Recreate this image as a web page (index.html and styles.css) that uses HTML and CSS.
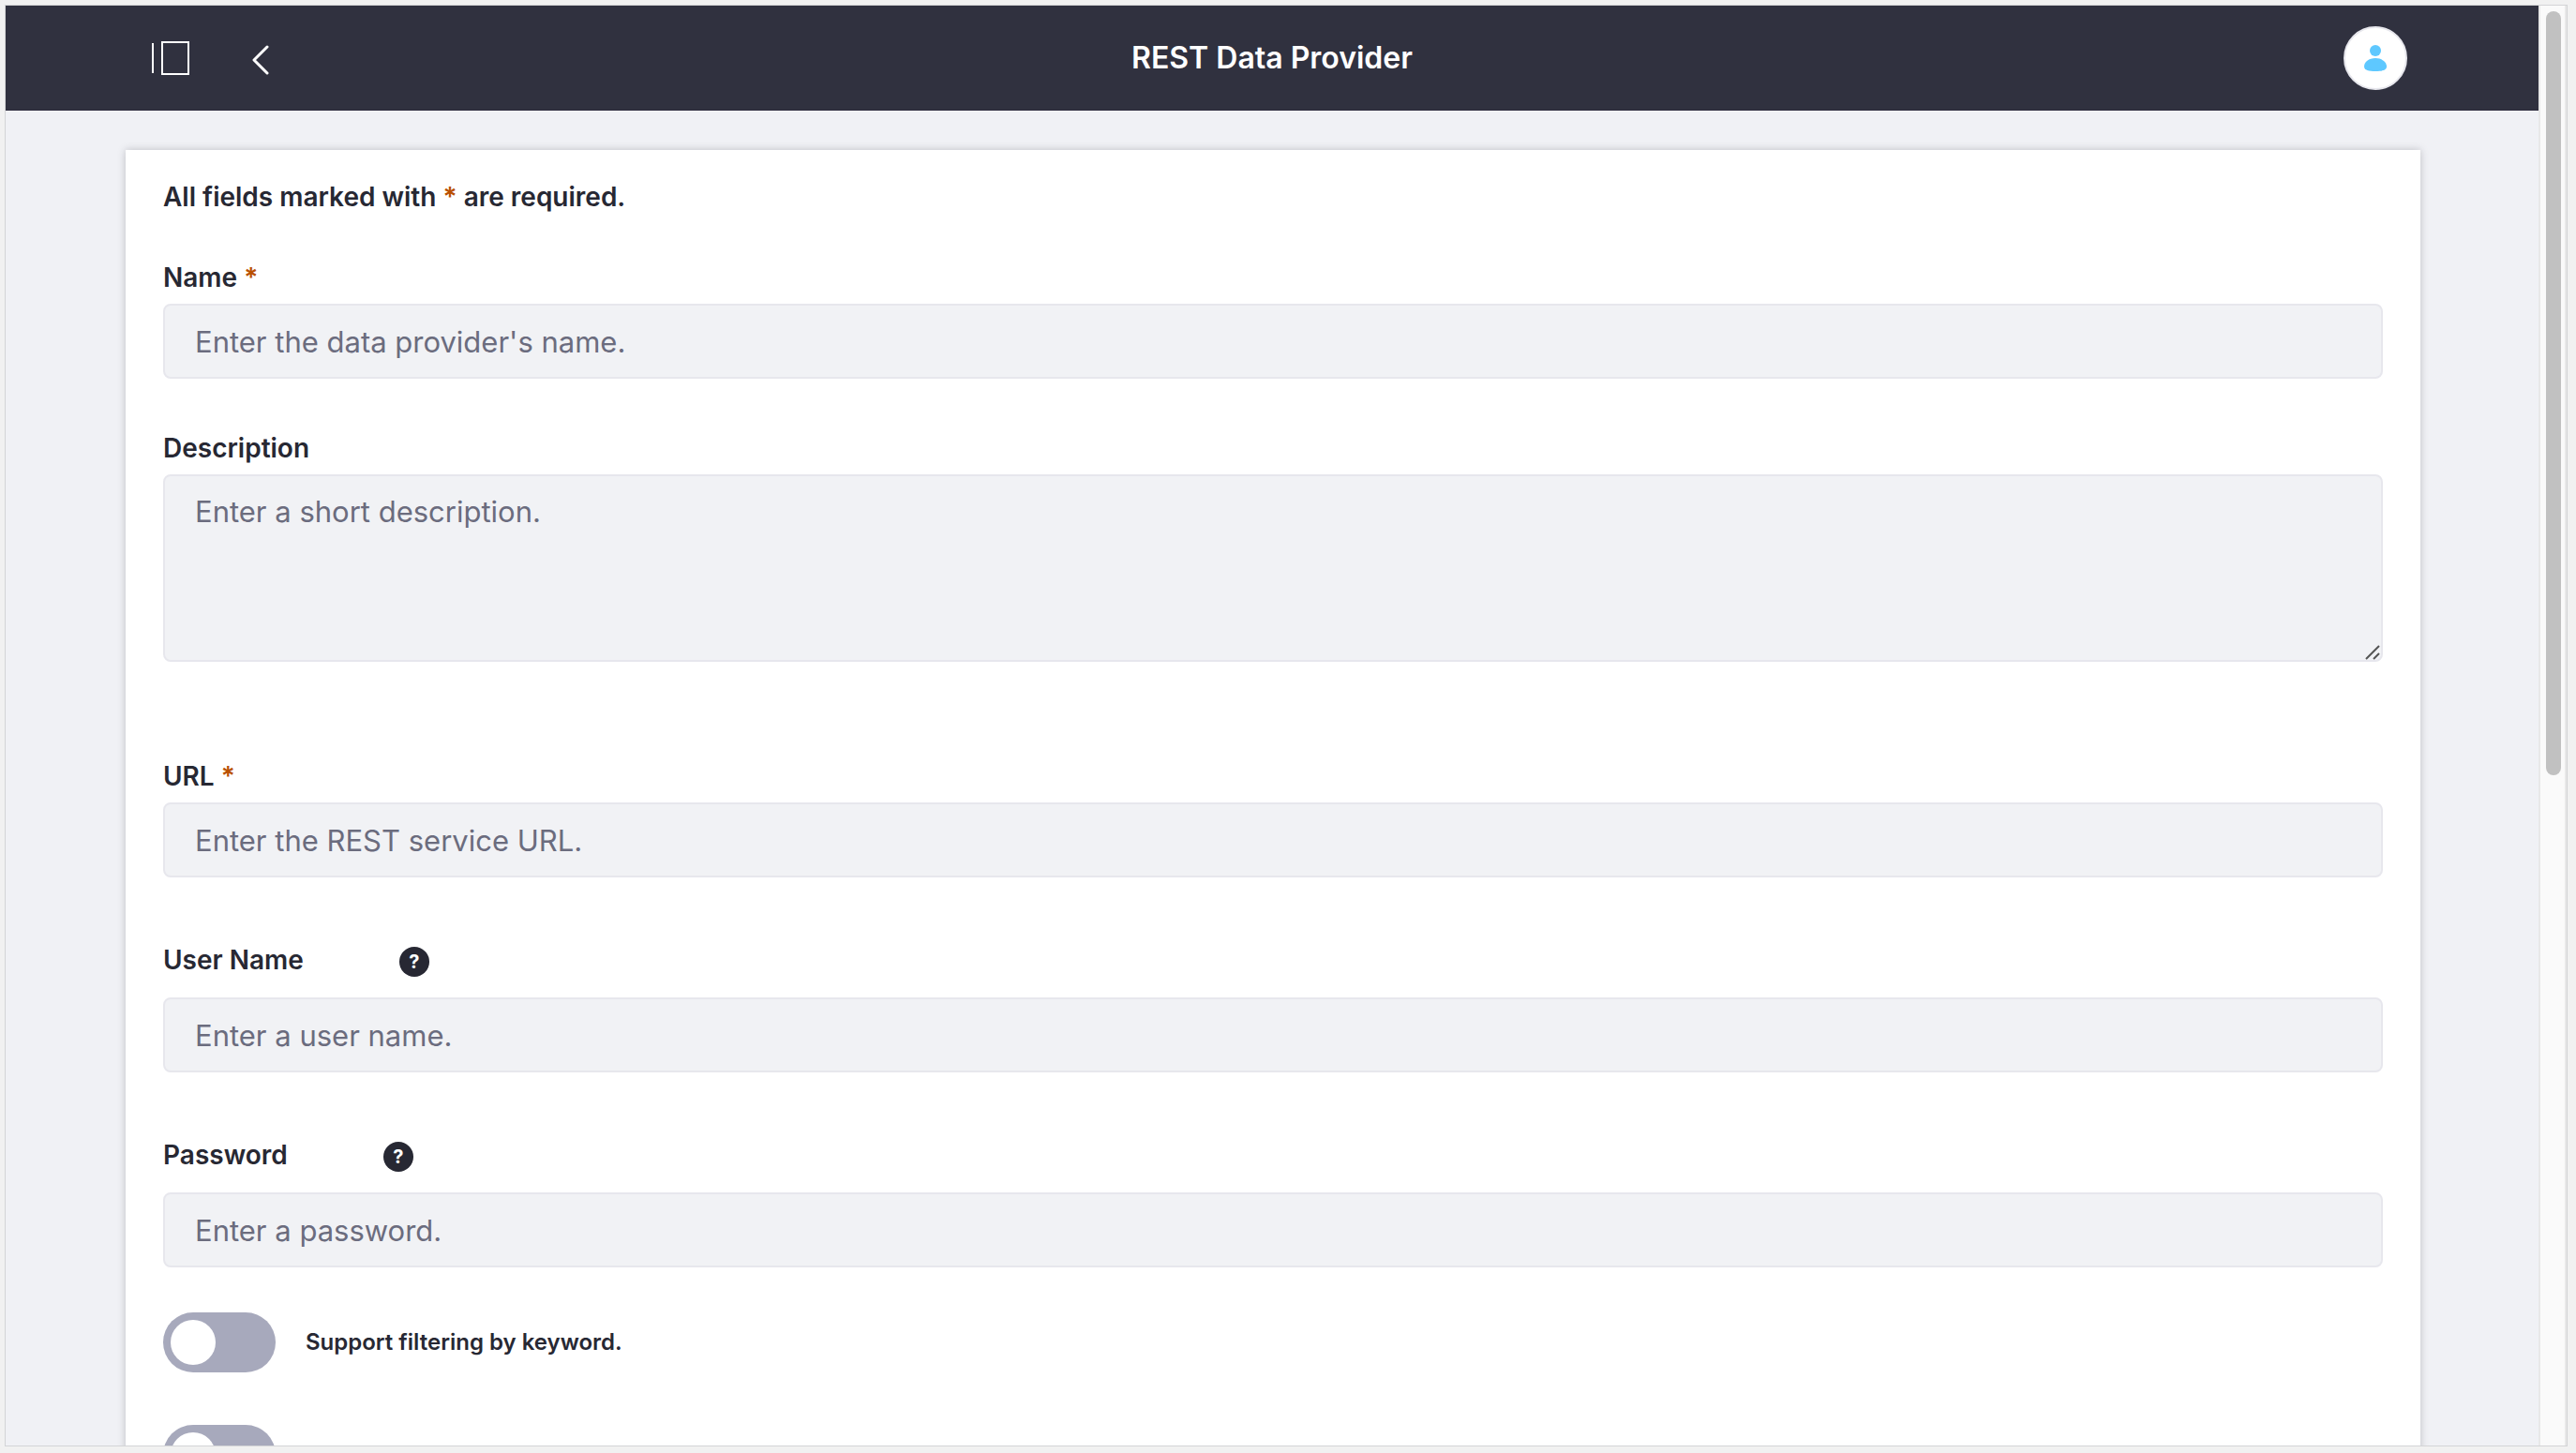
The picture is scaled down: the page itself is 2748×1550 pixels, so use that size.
FILE: index.html
```html
<!DOCTYPE html>
<html lang="en">
<head>
<meta charset="utf-8">
<title>REST Data Provider</title>
<link rel="stylesheet" href="styles.css">
</head>
<body>
<div class="window">
  <div class="viewport">
    <header class="topbar">
      <nav class="topbar-nav">
        <button class="icon-button" type="button" aria-label="Toggle menu">
          <svg width="40" height="36" viewBox="0 0 40 36" fill="none" stroke="#fff" stroke-width="2"><path d="M1 2v32M11 1h28v34H11z"/></svg>
        </button>
        <a class="icon-button" href="#" aria-label="Back">
          <svg width="18" height="36" viewBox="0 0 18 36" fill="none" stroke="#fff" stroke-width="3" stroke-linecap="round" stroke-linejoin="round"><path d="M16 6L2 20l14 14"/></svg>
        </a>
      </nav>
      <h1 class="title">REST Data Provider</h1>
      <button class="avatar" type="button" aria-label="User profile">
        <svg width="24" height="28" viewBox="0 0 24 28" fill="#5ec8ff"><circle cx="12" cy="6" r="6"/><path d="M12 14c7 0 12 4 12 9 0 4-5 5-12 5S0 27 0 23c0-5 5-9 12-9z"/></svg>
      </button>
    </header>
    <main class="page">
      <form class="sheet">
        <p class="notice">All fields marked with <span class="required">*</span> are required.</p>
        <div class="field">
          <label class="label" for="name">Name <span class="required">*</span></label>
          <input class="control" id="name" type="text" placeholder="Enter the data provider's name.">
        </div>
        <div class="field field-long">
          <label class="label" for="description">Description</label>
          <div class="area-wrap">
            <textarea class="control control-area" id="description" placeholder="Enter a short description."></textarea>
            <svg class="grip" width="16" height="16" viewBox="0 0 16 16" fill="none" stroke="#555" stroke-width="2"><path d="M1 15L15 1M9 15l6-6"/></svg>
          </div>
        </div>
        <div class="field">
          <label class="label" for="url">URL <span class="required">*</span></label>
          <input class="control" id="url" type="text" placeholder="Enter the REST service URL.">
        </div>
        <div class="field">
          <div class="label-row">
            <label class="label" for="user">User Name</label>
            <button class="help" type="button" aria-label="Help for user name">?</button>
          </div>
          <input class="control" id="user" type="text" placeholder="Enter a user name.">
        </div>
        <div class="field">
          <div class="label-row">
            <label class="label" for="password">Password</label>
            <button class="help" type="button" aria-label="Help for password">?</button>
          </div>
          <input class="control" id="password" type="password" placeholder="Enter a password.">
        </div>
        <div class="switches">
          <label class="switch"><input class="switch-input" type="checkbox" role="switch">Support filtering by keyword.</label>
          <label class="switch"><input class="switch-input" type="checkbox" role="switch" aria-label="Cache data on the first request"></label>
        </div>
      </form>
    </main>
  </div>
  <div class="scrollbar"><div class="thumb"></div></div>
</div>
</body>
</html>
```
FILE: styles.css
```css
* { box-sizing: border-box; }

body {
  margin: 0;
  height: 100vh;
  padding: 5px 9px 7px 5px;
  background: #f1f1f1;
  color: #272833;
  font-family: Inter, "Liberation Sans", sans-serif;
  overflow: hidden;
}

.window {
  display: flex;
  height: 100%;
  border: 1px solid #d3d4d6;
  background: #f0f1f5;
  overflow: hidden;
}

.viewport { flex: 1; min-width: 0; overflow: hidden; }

.topbar {
  display: grid;
  grid-template-columns: 1fr auto 1fr;
  align-items: center;
  height: 112px;
  padding: 0 140px;
  background: #30313f;
  box-shadow: inset 0 -1px #2c2a3c;
}

.topbar-nav { display: flex; align-items: center; gap: 67px; padding-left: 16px; }

.icon-button {
  display: block;
  padding: 0;
  border: 0;
  background: none;
}

.icon-button svg, .avatar svg { display: block; }

.title {
  margin: 0;
  color: #fff;
  font-size: 32px;
  font-weight: 600;
  line-height: 48px;
}

.avatar {
  display: grid;
  place-items: center;
  justify-self: end;
  width: 68px;
  height: 68px;
  padding: 0;
  border: 2px solid #e7e7ed;
  border-radius: 50%;
  background: #fff;
}

.page { padding: 42px 126px 42px 128px; }

.sheet {
  padding: 30px 40px;
  background: #fff;
  box-shadow: 0 0 8px rgba(39, 40, 51, 0.25);
}

.notice { margin: 0 0 46px; font-size: 28px; font-weight: 600; line-height: 40px; }

.required { color: #b95000; }

.field { margin-bottom: 54px; }
.field-long { margin-bottom: 102px; }

.label { display: block; padding-bottom: 8px; font-size: 28px; font-weight: 600; line-height: 40px; }

.label-row { display: flex; align-items: flex-start; gap: 102px; padding: 14px 0 20px; }
.label-row .label { padding: 0; }

.control {
  display: block;
  width: 100%;
  height: 80px;
  padding: 0 32px;
  border: 2px solid #e7e7ed;
  border-radius: 8px;
  background: #f1f2f5;
  color: #272833;
  font-family: inherit;
  font-size: 31px;
  line-height: 48px;
}

.control::placeholder { color: #6b6c7e; opacity: 1; }

.area-wrap { position: relative; }

.control-area { height: 200px; padding: 14px 32px; resize: vertical; }
.control-area::-webkit-resizer { background: transparent; }

/* Larger resize grip, drawn over the corner of the text area */
.grip { position: absolute; right: 3px; bottom: 2px; pointer-events: none; }

.help {
  width: 32px;
  height: 32px;
  margin-top: 6px;
  padding: 0;
  border: 0;
  border-radius: 50%;
  background: #272833;
  color: #fff;
  font-family: inherit;
  font-size: 20px;
  font-weight: 700;
  line-height: 32px;
}

.switches { display: grid; gap: 56px; margin-top: -6px; }

.switch {
  display: flex;
  align-items: center;
  gap: 32px;
  font-size: 24px;
  font-weight: 600;
  line-height: 32px;
}

.switch-input {
  appearance: none;
  width: 120px;
  height: 64px;
  margin: 0;
  padding: 8px;
  border-radius: 32px;
  background: #a7a9bc;
}

.switch-input::before {
  content: "";
  display: block;
  width: 48px;
  height: 48px;
  border-radius: 50%;
  background: #fff;
}

.switch-input:checked::before { margin-left: auto; }

.scrollbar {
  width: 30px;
  padding: 6px;
  border: solid #e8e8e8;
  border-width: 0 2px;
  background: #fafafa;
}

.thumb { width: 16px; height: 53.5%; border-radius: 8px; background: #c1c1c1; }
```
